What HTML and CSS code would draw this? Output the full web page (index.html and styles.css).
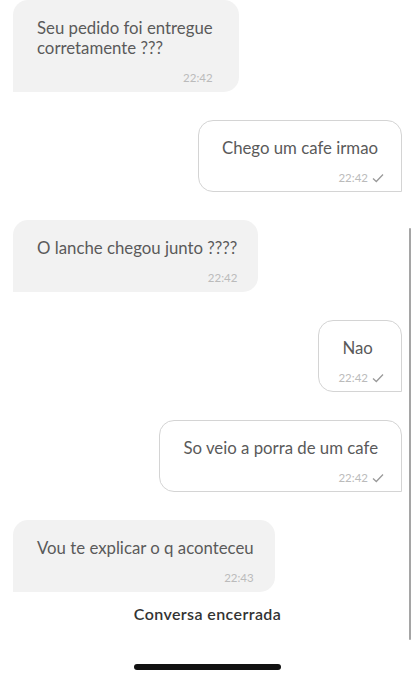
FILE: index.html
```html
<!DOCTYPE html>
<html lang="pt">
<head>
    <meta charset="UTF-8">
    <meta name="viewport" content="width=device-width, initial-scale=1.0">
    <title>Chat</title>
    <link rel="stylesheet" href="styles.css">
</head>
<body>
    <div class="screen">
        <div class="chat">
            <div class="msg received">
                <p class="text">Seu pedido foi entregue<br>corretamente ???</p>
                <div class="meta">22:42</div>
            </div>
            <div class="msg sent">
                <p class="text">Chego um cafe irmao</p>
                <div class="meta">22:42 <svg class="check" viewBox="0 0 12 10"><path d="M1 5.5 L4.3 8.5 L11 1.5"/></svg></div>
            </div>
            <div class="msg received">
                <p class="text">O lanche chegou junto ????</p>
                <div class="meta">22:42</div>
            </div>
            <div class="msg sent">
                <p class="text">Nao</p>
                <div class="meta">22:42 <svg class="check" viewBox="0 0 12 10"><path d="M1 5.5 L4.3 8.5 L11 1.5"/></svg></div>
            </div>
            <div class="msg sent">
                <p class="text">So veio a porra de um cafe</p>
                <div class="meta">22:42 <svg class="check" viewBox="0 0 12 10"><path d="M1 5.5 L4.3 8.5 L11 1.5"/></svg></div>
            </div>
            <div class="msg received">
                <p class="text">Vou te explicar o q aconteceu</p>
                <div class="meta">22:43</div>
            </div>
        </div>
        <div class="ended">Conversa encerrada</div>
        <div class="home-bar"></div>
        <div class="scrollbar"></div>
    </div>
</body>
</html>
```

FILE: styles.css
```css
body {
    margin: 0;
    padding: 0;
    background: #fff;
    font-family: Lato, "Open Sans", sans-serif;
}
.screen {
    position: relative;
    width: 415px;
    height: 680px;
    overflow: hidden;
}
.chat {
    display: flex;
    flex-direction: column;
    gap: 28px;
    padding: 0 13px;
}
.msg {
    padding: 18px 21px 7px 24px;
    border-radius: 15px;
    box-sizing: border-box;
}
.received {
    align-self: flex-start;
    background: #f2f2f2;
    border-bottom-left-radius: 0;
}
.received:first-child {
    padding-right: 26px;
}
.sent {
    align-self: flex-end;
    background: #fff;
    border: 1px solid #d4d4d4;
    border-bottom-right-radius: 0;
    padding: 17px 17px 6px 19px;
}
.text {
    margin: 0;
    font-size: 16.8px;
    line-height: 20px;
    color: #5a5a5a;
}
.sent .text {
    padding: 0 6px 0 4px;
}
.meta {
    margin-top: 13px;
    display: flex;
    justify-content: flex-end;
    align-items: center;
    gap: 4px;
    font-size: 11.5px;
    line-height: 14px;
    color: #bbb;
}
.check {
    width: 12px;
    height: 10px;
    fill: none;
    stroke: #9a9a9a;
    stroke-width: 1.3;
}
.ended {
    margin-top: 12px;
    text-align: center;
    font-size: 16px;
    line-height: 20px;
    font-weight: 600;
    letter-spacing: 0.4px;
    color: #333;
}
.home-bar {
    width: 147px;
    height: 6px;
    margin: 40px auto 0;
    border-radius: 3px;
    background: #111;
}
.scrollbar {
    position: absolute;
    right: 4px;
    top: 228px;
    width: 2px;
    height: 412px;
    background: #a5a5a5;
    border-radius: 1px;
}
```
